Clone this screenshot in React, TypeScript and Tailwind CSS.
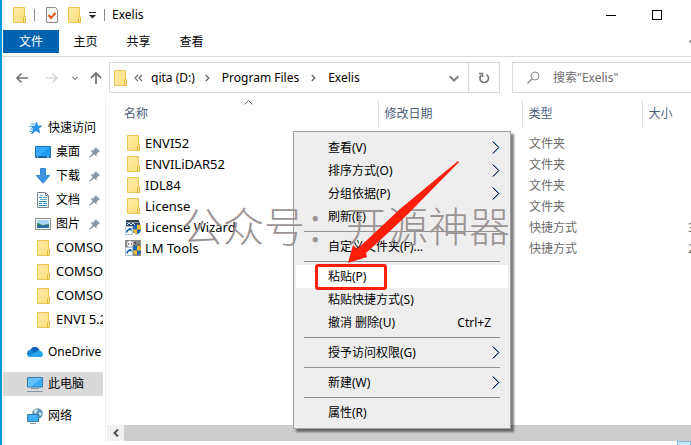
import type { ReactNode } from "react";

interface FileEntry {
  name: string;
  type: string;
  size?: string;
  icon: "folder" | "wizard" | "tools";
}

const files: FileEntry[] = [
  { name: "ENVI52", type: "文件夹", icon: "folder" },
  { name: "ENVILiDAR52", type: "文件夹", icon: "folder" },
  { name: "IDL84", type: "文件夹", icon: "folder" },
  { name: "License", type: "文件夹", icon: "folder" },
  { name: "License Wizard", type: "快捷方式", size: "3 KB", icon: "wizard" },
  { name: "LM Tools", type: "快捷方式", size: "2 KB", icon: "tools" },
];

interface MenuEntry {
  label: string;
  shortcut?: string;
  submenu?: boolean;
  active?: boolean;
}

const menuGroups: MenuEntry[][] = [
  [
    { label: "查看(V)", submenu: true },
    { label: "排序方式(O)", submenu: true },
    { label: "分组依据(P)", submenu: true },
    { label: "刷新(E)" },
  ],
  [{ label: "自定义文件夹(F)..." }],
  [
    { label: "粘贴(P)", active: true },
    { label: "粘贴快捷方式(S)" },
    { label: "撤消 删除(U)", shortcut: "Ctrl+Z" },
  ],
  [{ label: "授予访问权限(G)", submenu: true }],
  [{ label: "新建(W)", submenu: true }],
  [{ label: "属性(R)" }],
];

function FolderIcon() {
  return (
    <svg width="13" height="16" viewBox="0 0 13 16" className="shrink-0">
      <defs>
        <linearGradient id="folder" x1="0" y1="0" x2="1" y2="1">
          <stop offset="0" stopColor="#ffeba6" />
          <stop offset="1" stopColor="#fddf7c" />
        </linearGradient>
      </defs>
      <path d="M.5.5h11v8.5l1 1v5.5H.5z" fill="url(#folder)" stroke="#ebc855" />
      <path d="M10.500 15.500v-5l1-1.200 1 1.200v5z" fill="#ffe89b" stroke="#e3b93c" />
    </svg>
  );
}

function ShortcutIcon({ kind }: { kind: "wizard" | "tools" }) {
  return (
    <svg width="16" height="16" viewBox="0 0 16 16" className="shrink-0">
      {kind === "wizard" ? (
        <>
          <path d="M1 1h13l1 3v10H1z" fill="#8295aa" />
          <path d="M1 1h13v2H1z" fill="#38404c" />
          <path d="M1 4h14v3H1z" fill="#2c4668" />
          <path d="M2 6l2-2 2 2 2-2 2 2" stroke="#dfe8ef" fill="none" />
        </>
      ) : (
        <>
          <path d="M0 0h16v16H0z" fill="#8a8a8a" />
          <circle cx="5" cy="4" r="3" fill="#f3f3f3" />
          <path d="M3 4h1M6 4h1M9 5l2 2 3-3M10 2l1 2" stroke="#222" fill="none" />
          <path d="M9 7h7v2H9z" fill="#d8d8d8" />
        </>
      )}
      <path d="M8 6.500l4-1 4 1v4c0 2.500-2 4-4 5-2-1-4-2.500-4-5z" fill="#1c67b6" />
      <path d="M12 5.500l4 1v4h-4zM8 10.500h4v5c-2-1-4-2.500-4-5z" fill="#f5bd2d" />
      <path d="M.5 7.500h7v8h-7z" fill="#f8fbff" stroke="#b4c3d1" />
      <path d="M2 13.500c0-2 1-3 3-3" stroke="#1763b3" strokeWidth="1.500" fill="none" />
      <path d="M3.500 9h3v3.500z" fill="#1763b3" />
    </svg>
  );
}

function PinIcon() {
  return (
    <svg width="11" height="11" viewBox="0 0 11 11" className="mr-[3px] ml-auto shrink-0">
      <path d="M6.500 0L11 4.500 9.500 5 7.800 6.700 7.500 9.500 5 7.400 1 10.800 0 11 .2 10 3.600 6 1.500 3.500 4.300 3.200 6 1.500z" fill="#8d9aa5" />
    </svg>
  );
}

function StarIcon() {
  return (
    <svg width="16" height="16" viewBox="0 0 16 16" className="shrink-0">
      <path d="M9.500 2l1.300 4h4l-3.200 2.500 1.200 4.500-3.700-2.500L5 13.500l1.600-5L4 6.200h4z" fill="#2196ea" stroke="#1479c9" strokeWidth=".6" />
      <path d="M4 4h4M2 6.500h3M3 9h3M2 11.500h3M4 13.500h2" stroke="#4baeea" />
    </svg>
  );
}

function DesktopIcon() {
  return (
    <svg width="16" height="16" viewBox="0 0 16 16" className="shrink-0">
      <path d="M.5 2.500h15v11H.5z" fill="#1f9cf8" stroke="#1577bd" />
      <path d="M1 3h14L4 12H1z" fill="#35a9fb" />
      <path d="M1 13h14" stroke="#123f6b" />
      <path d="M2 13h1M12 13h2" stroke="#e2f2ff" />
    </svg>
  );
}

function DownloadIcon() {
  return (
    <svg width="16" height="16" viewBox="0 0 16 16" className="shrink-0">
      <path d="M5.500.5h5v7h4.300L8 15.300 1.200 7.500h4.300z" fill="#3b94e4" stroke="#2377c4" strokeWidth=".8" />
    </svg>
  );
}

function DocumentIcon() {
  return (
    <svg width="16" height="16" viewBox="0 0 16 16" className="shrink-0">
      <path d="M2.500.5h8l3 3v12h-11z" fill="#fff" stroke="#7d858c" />
      <path d="M10.500.5v3h3" fill="none" stroke="#7d858c" />
      <path d="M4 5.500h3M4 9.500h8M4 11.500h3M4 13.500h8M8.500 11.500H12" stroke="#2c8ac2" />
      <path d="M5 7.500h7M8 5.500h4M5 3.500h3" stroke="#5aa3d0" />
    </svg>
  );
}

function PictureIcon() {
  return (
    <svg width="16" height="16" viewBox="0 0 16 16" className="shrink-0">
      <path d="M.5 2.500h15v11H.5z" fill="#fff" stroke="#8a8f94" />
      <path d="M2 4h12v8H2z" fill="#a9d4f2" />
      <path d="M2 7c3 0 4 2 6 2s3-1 6-1v2H2z" fill="#3b8268" />
      <path d="M2 9.500h12V12H2z" fill="#2b6da3" />
    </svg>
  );
}

function CloudIcon() {
  return (
    <svg width="16" height="16" viewBox="0 0 16 16" className="shrink-0">
      <path d="M3 8.500C3 5 5 3 8 3c2.400 0 4 1.300 4.600 3.500L10 10H2z" fill="#0a63b5" />
      <circle cx="3.500" cy="9.500" r="3.400" fill="#1384d8" />
      <path d="M9 8c2-2.500 7-1.500 7 2.400 0 1.600-1 2.600-2.500 2.600H3.300C2.300 13 1.300 12.500 1 12z" fill="#27a6ee" />
    </svg>
  );
}

function ComputerIcon() {
  return (
    <svg width="16" height="16" viewBox="0 0 16 16" className="shrink-0">
      <path d="M.5 1.500h15v9.500H.5z" fill="#39adff" stroke="#3d7ca5" />
      <path d="M1 2h14L4 10.500H1z" fill="#65c4ff" />
      <path d="M4 12.500h8M0 15.500h16" stroke="#8597ab" />
    </svg>
  );
}

function NetworkIcon() {
  return (
    <svg width="16" height="16" viewBox="0 0 16 16" className="shrink-0">
      <circle cx="10.500" cy="5.500" r="5.300" fill="#5796b4" />
      <path d="M7 2.500c2-2 4-1 4 0s-2 1-2 3-2 0-2-3zM12 4l3 1-1 3-2-1z" fill="#c8e4ea" />
      <path d="M.5 6.500h11v7H.5z" fill="#40b2fd" stroke="#3b789e" />
      <path d="M3 15.500h6" stroke="#8597ab" />
    </svg>
  );
}

function ChevronDown({ size = 8 }: { size?: number }) {
  return (
    <svg width={size} height={size} viewBox="0 0 8 8">
      <path d="M.5 2.500L4 6l3.500-3.500" fill="none" stroke="#808080" strokeWidth="1.600" />
    </svg>
  );
}

function CrumbArrow() {
  return (
    <svg width="5" height="8" viewBox="0 0 5 8" className="shrink-0">
      <path d="M.8 1L3.800 4l-3 3" fill="none" stroke="#6c6c6c" strokeWidth="1.400" />
    </svg>
  );
}

interface NavItemProps {
  icon: ReactNode;
  label: string;
  nested?: boolean;
  pinned?: boolean;
  selected?: boolean;
}

function NavItem({ icon, label, nested, pinned, selected }: NavItemProps) {
  return (
    <a
      href="#"
      className={`ml-px flex h-6 items-center overflow-hidden whitespace-nowrap ${nested ? "pl-8" : "pl-6"} ${nested && !pinned ? "text-[13px]" : ""} ${selected ? "bg-[#d9d9d9]" : ""}`}
    >
      <span className="mr-[5px] flex w-4 shrink-0 justify-center">{icon}</span>
      <span>{label}</span>
      {pinned && <PinIcon />}
    </a>
  );
}

function TitleBar() {
  return (
    <header className="flex h-[30px] items-center">
      <div className="flex items-center pl-[11px]">
        <FolderIcon />
        <span className="ml-2 h-3 w-px bg-[#8c8c8c]" />
        <button aria-label="属性" className="ml-[11px]">
          <svg width="12" height="16" viewBox="0 0 12 16">
            <path d="M.5.500h9l2 2v13H.5z" fill="#f4f4f4" stroke="#8d8d8d" />
            <path d="M2.500 8l2.500 3 4.500-5" fill="none" stroke="#e8581c" strokeWidth="2" />
          </svg>
        </button>
        <button aria-label="新建文件夹" className="ml-[10px]">
          <FolderIcon />
        </button>
        <button aria-label="自定义快速访问工具栏" className="ml-2">
          <svg width="7" height="7" viewBox="0 0 7 7">
            <path d="M0 .5h7" stroke="#222" />
            <path d="M0 3h7L3.500 6.500z" fill="#222" />
          </svg>
        </button>
        <span className="ml-2 h-3 w-px bg-[#8c8c8c]" />
        <h1 className="ml-[7px]">Exelis</h1>
      </div>
      <div className="mr-[11px] ml-auto flex h-full">
        <button aria-label="最小化" className="flex w-[46px] items-center justify-center">
          <span className="h-px w-[10px] bg-black" />
        </button>
        <button aria-label="最大化" className="flex w-[46px] items-center justify-center">
          <span className="size-[10px] border border-black" />
        </button>
      </div>
    </header>
  );
}

function RibbonTabs() {
  return (
    <nav className="flex h-[27px] border-b border-[#dadada] pb-[3px]">
      <button className="ml-px w-14 bg-[#0063b1] text-white">文件</button>
      <button className="w-[53px]">主页</button>
      <button className="w-[53px]">共享</button>
      <button className="w-[53px]">查看</button>
      <button aria-label="展开功能区" className="-mr-[6px] ml-auto">
        <ChevronDown />
      </button>
    </nav>
  );
}

function AddressRow() {
  return (
    <div className="flex items-center pt-[5px]">
      <div className="flex w-[107px] shrink-0 items-center pl-[14px]">
        <button aria-label="后退">
          <svg width="12" height="12" viewBox="0 0 12 12">
            <path d="M12 6H1M5.500 1.500L1 6l4.500 4.500" fill="none" stroke="#747474" strokeWidth="1.600" />
          </svg>
        </button>
        <button aria-label="前进" disabled className="ml-[18px]">
          <svg width="12" height="12" viewBox="0 0 12 12">
            <path d="M0 6h11M6.500 1.500L11 6l-4.500 4.500" fill="none" stroke="#d9d9d9" strokeWidth="1.600" />
          </svg>
        </button>
        <button aria-label="最近浏览的位置" className="ml-[14px]">
          <ChevronDown size={6} />
        </button>
        <button aria-label="上移" className="ml-3">
          <svg width="12" height="12" viewBox="0 0 12 12">
            <path d="M6 12V1M1 6l5-5 5 5" fill="none" stroke="#747474" strokeWidth="1.800" />
          </svg>
        </button>
      </div>
      <div className="flex h-[31px] min-w-0 flex-1 items-center border border-[#d9d9d9] pl-1">
        <FolderIcon />
        <svg width="9" height="8" viewBox="0 0 9 8" className="ml-[7px] shrink-0">
          <path d="M4 1L1 4l3 3M8 1L5 4l3 3" fill="none" stroke="#6c6c6c" strokeWidth="1.200" />
        </svg>
        <button className="mr-[10px] ml-2">qita (D:)</button>
        <CrumbArrow />
        <button className="mx-3 whitespace-nowrap">Program Files</button>
        <CrumbArrow />
        <button className="ml-3">Exelis</button>
        <button aria-label="上一个位置" className="mr-[9px] ml-auto">
          <ChevronDown size={10} />
        </button>
        <button aria-label="刷新" className="flex h-full w-[31px] items-center justify-center border-l border-[#d9d9d9]">
          <svg width="12" height="12" viewBox="0 0 12 12">
            <path d="M8.500 2.600A4.300 4.300 0 1 1 3 3.400M1 1.500h3.500V5" fill="none" stroke="#747474" strokeWidth="1.600" />
          </svg>
        </button>
      </div>
      <label className="ml-3 flex h-[31px] w-[179px] items-center border border-r-0 border-[#d9d9d9] pl-[14px]">
        <svg width="13" height="13" viewBox="0 0 13 13" className="shrink-0">
          <circle cx="8" cy="5" r="4" fill="none" stroke="#8a8a8a" />
          <path d="M5 8L.5 12.500" stroke="#8a8a8a" strokeWidth="1.200" />
        </svg>
        <input
          type="text"
          aria-label="搜索"
          placeholder={'搜索"Exelis"'}
          className="ml-[13px] w-full min-w-0 outline-none placeholder:text-[#6d6d6d]"
        />
      </label>
    </div>
  );
}

function Sidebar() {
  return (
    <aside className="w-[101px] shrink-0 pt-[19px]">
      <NavItem icon={<StarIcon />} label="快速访问" />
      <NavItem icon={<DesktopIcon />} label="桌面" nested pinned />
      <NavItem icon={<DownloadIcon />} label="下载" nested pinned />
      <NavItem icon={<DocumentIcon />} label="文档" nested pinned />
      <NavItem icon={<PictureIcon />} label="图片" nested pinned />
      <NavItem icon={<FolderIcon />} label="COMSO" nested />
      <NavItem icon={<FolderIcon />} label="COMSO" nested />
      <NavItem icon={<FolderIcon />} label="COMSO" nested />
      <NavItem icon={<FolderIcon />} label="ENVI 5.2" nested />
      <div className="mt-2 flex flex-col gap-2">
        <NavItem icon={<CloudIcon />} label="OneDrive" />
        <NavItem icon={<ComputerIcon />} label="此电脑" selected />
        <NavItem icon={<NetworkIcon />} label="网络" />
      </div>
    </aside>
  );
}

function FileTable() {
  return (
    <table className="w-full table-fixed border-collapse text-left">
      <thead>
        <tr className="h-[27px] text-[#4c607a]">
          <th className="relative w-[272px] pl-[18px] font-normal">
            名称
            <svg width="9" height="5" viewBox="0 0 9 5" className="absolute top-0 left-[138px]">
              <path d="M.5 4.500l4-4 4 4" fill="none" stroke="#6d6d6d" />
            </svg>
          </th>
          <th className="w-36 border-l border-[#e2e2e2] pl-[6px] font-normal">修改日期</th>
          <th className="w-[120px] border-l border-[#e2e2e2] pl-[6px] font-normal">类型</th>
          <th className="border-l border-[#e2e2e2] pl-[6px] font-normal">大小</th>
        </tr>
        <tr className="h-[6px]" />
      </thead>
      <tbody>
        {files.map((file) => (
          <tr key={file.name} className="h-[21px] whitespace-nowrap">
            <td className="p-0 text-[13px]">
              <div className="flex items-center pl-[19px]">
                <span className="mr-1 flex w-4 justify-center">
                  {file.icon === "folder" ? <FolderIcon /> : <ShortcutIcon kind={file.icon} />}
                </span>
                {file.name}
              </div>
            </td>
            <td />
            <td className="p-0 pl-[7px] text-[#6d6d6d]">{file.type}</td>
            <td className="overflow-hidden p-0 pl-[46px] text-[#6d6d6d]">{file.size}</td>
          </tr>
        ))}
      </tbody>
    </table>
  );
}

function ContextMenu() {
  return (
    <div
      role="menu"
      className="absolute top-[131px] left-[293px] w-[218px] border border-[#a0a0a0] bg-[#eeeeee] px-[2px] py-1 shadow-[3px_3px_2px_rgba(0,0,0,0.5)]"
    >
      {menuGroups.map((group, index) => (
        <div key={group[0].label}>
          {index > 0 && <hr className="mx-2 my-[3px] border-[#919191]" />}
          {group.map((item) => (
            <button
              key={item.label}
              role="menuitem"
              className={`flex h-[23px] w-full items-center pr-2 pl-8 whitespace-nowrap ${item.active ? "bg-white" : ""}`}
            >
              {item.label}
              {item.shortcut && <span className="mr-[9px] ml-auto">{item.shortcut}</span>}
              {item.submenu && (
                <svg width="8" height="13" viewBox="0 0 8 13" className="ml-auto">
                  <path d="M1.500.5l6 6-6 6" fill="none" stroke="#4ba3e8" />
                  <path d="M.5.5l6 6-6 6" fill="none" stroke="#4a1d2c" />
                </svg>
              )}
            </button>
          ))}
        </div>
      ))}
    </div>
  );
}

export default function App() {
  return (
    <div className="relative min-h-screen overflow-hidden border-l-2 border-[#0099dc] bg-white font-['Noto_Sans','Noto_Sans_CJK_SC',sans-serif] text-xs text-black">
      <TitleBar />
      <RibbonTabs />
      <AddressRow />
      <div className="mt-1 flex">
        <Sidebar />
        <main className="ml-[2px] flex min-w-0 flex-1 flex-col border-l border-[#f0f0f0]">
          <div className="h-[328px] pt-[3px]">
            <FileTable />
          </div>
          <div className="ml-px flex h-4 bg-[#cdcdcd]">
            <button aria-label="向左滚动" className="flex w-[17px] items-center justify-center bg-[#f0f0f0]">
              <svg width="6" height="8" viewBox="0 0 6 8">
                <path d="M5 .5L1.500 4 5 7.500" fill="none" stroke="#505050" strokeWidth="2" />
              </svg>
            </button>
          </div>
        </main>
      </div>
      <footer className="flex h-1 justify-end">
        <button aria-label="详细信息" className="w-[14px] border border-b-0 border-[#7eb8e0] bg-[#cce8ff]" />
      </footer>
      <div className="absolute inset-0 -left-[2px]">
        <ContextMenu />
        <p className="pointer-events-none absolute top-[196px] left-[182px] text-[41px] leading-[60px] font-light whitespace-nowrap text-[#9c9494]">
          公众号：开源神器
        </p>
        <svg width="115" height="106" viewBox="0 0 115 106" className="pointer-events-none absolute top-[159px] left-[346px]">
          <path d="M2 104L7 86l4 4 10-9 33-31L112 2l1 1-50 51-21 20-22 20 1 4z" fill="#ff1e0a" />
        </svg>
        <div className="pointer-events-none absolute top-[264px] left-[315px] h-[26px] w-[72px] rounded-[3px] border-3 border-[#ff1e0a]" />
      </div>
    </div>
  );
}
